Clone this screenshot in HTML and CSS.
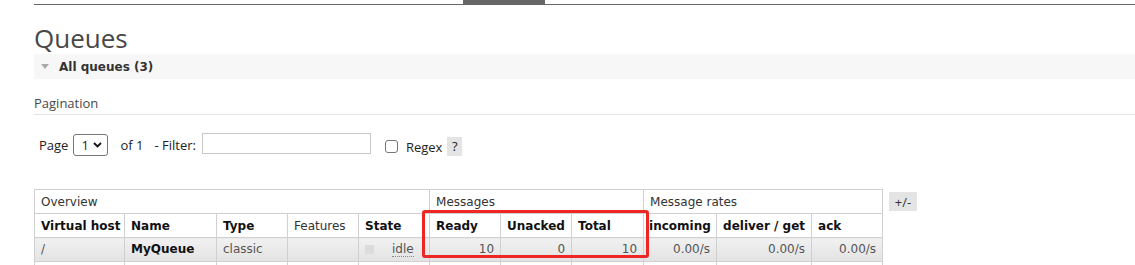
FILE: index.html
```html
<!DOCTYPE html>
<html lang="en">
<head>
    <meta charset="UTF-8">
    <meta name="viewport" content="width=device-width, initial-scale=1.0">
    <title>Queues</title>
    <link rel="stylesheet" href="styles.css">
</head>
<body>

<div class="nav"><span class="nav-tab"></span></div>

<div class="content">
    <h1>Queues</h1>

    <div class="section">
        <h2 class="section-title"><span class="toggle"></span>All queues (3)</h2>

        <h3 class="subtitle">Pagination</h3>

        <div class="pager">
            <span class="pager-label">Page</span>
            <span class="select-wrap">
                <select class="page-select">
                    <option>1</option>
                </select>
                <svg class="chevron" width="9" height="6" viewBox="0 0 9 6"><path d="M1 1 L4.5 4.5 L8 1" fill="none" stroke="#111" stroke-width="1.8"/></svg>
            </span>
            <span class="pager-of">of 1</span>
            <span class="pager-filter">- Filter:</span>
            <input type="text" class="filter-input">
            <input type="checkbox" class="regex-box" id="regex">
            <label class="regex-label" for="regex">Regex</label>
            <span class="help">?</span>
        </div>

        <div class="table-row">
            <div class="table-box">
                <table class="list">
                    <colgroup>
                        <col style="width: 90px">
                        <col style="width: 92px">
                        <col style="width: 71px">
                        <col style="width: 71px">
                        <col style="width: 71px">
                        <col style="width: 71px">
                        <col style="width: 71px">
                        <col style="width: 72px">
                        <col style="width: 73px">
                        <col style="width: 95px">
                        <col style="width: 71px">
                    </colgroup>
                    <thead>
                        <tr>
                            <th colspan="5" class="group">Overview</th>
                            <th colspan="3" class="group">Messages</th>
                            <th colspan="3" class="group">Message rates</th>
                        </tr>
                        <tr>
                            <th>Virtual host</th>
                            <th>Name</th>
                            <th>Type</th>
                            <th class="plain">Features</th>
                            <th>State</th>
                            <th>Ready</th>
                            <th>Unacked</th>
                            <th>Total</th>
                            <th class="tight">incoming</th>
                            <th>deliver / get</th>
                            <th>ack</th>
                        </tr>
                    </thead>
                    <tbody>
                        <tr class="alt1">
                            <td>/</td>
                            <td class="name">MyQueue</td>
                            <td>classic</td>
                            <td></td>
                            <td><span class="status"></span><abbr class="state">idle</abbr></td>
                            <td class="num">10</td>
                            <td class="num">0</td>
                            <td class="num">10</td>
                            <td class="num">0.00/s</td>
                            <td class="num">0.00/s</td>
                            <td class="num">0.00/s</td>
                        </tr>
                        <tr class="alt2">
                            <td></td><td></td><td></td><td></td><td></td><td></td>
                            <td></td><td></td><td></td><td></td><td></td>
                        </tr>
                    </tbody>
                </table>
                <!-- Rdeč okvir okoli stolpcev sporočil -->
                <div class="highlight"></div>
            </div>
            <button class="columns-toggle">+/-</button>
        </div>
    </div>
</div>

</body>
</html>
```

FILE: styles.css
```css
body {
    margin: 0;
    background-color: white;
    font-family: "Open Sans", Arial, sans-serif;
    color: #333333;
    overflow: hidden;
}

/* Zgornja vrstica z zavihki */
.nav {
    height: 4px;
    margin-left: 34px;
    border-bottom: 1px solid #666666;
}

.nav-tab {
    display: block;
    width: 82px;
    height: 4px;
    margin-left: 429px;
    background-color: #666666;
}

.content {
    margin-left: 34px;
}

h1 {
    margin: 18px 0 1px;
    font-size: 26px;
    line-height: 30px;
    font-weight: normal;
    color: #484848;
}

.section-title {
    display: flex;
    align-items: center;
    height: 25px;
    margin: 0;
    padding-left: 7px;
    background-color: #f7f7f7;
    font-family: "DejaVu Sans", Verdana, sans-serif;
    font-size: 12px;
    font-weight: bold;
    color: #333333;
}

.toggle {
    width: 0;
    height: 0;
    margin-right: 10px;
    border-left: 4px solid transparent;
    border-right: 4px solid transparent;
    border-top: 5px solid #aaaaaa;
}

.subtitle {
    margin: 16px 0 0;
    padding-bottom: 3px;
    font-size: 13px;
    line-height: 16px;
    font-weight: normal;
    color: #484848;
    border-bottom: 1px solid #e4e4e4;
}

/* Vrstica za strani in filter */
.pager {
    display: flex;
    align-items: center;
    height: 23px;
    margin-top: 18px;
    padding-left: 5px;
    font-size: 13px;
    color: #222222;
}

.select-wrap {
    position: relative;
    margin-left: 5px;
}

.page-select {
    appearance: none;
    display: block;
    width: 35px;
    height: 22px;
    padding: 0 0 0 7px;
    border: 1px solid #767676;
    border-radius: 3px;
    background: white;
    font-family: "Open Sans", Arial, sans-serif;
    font-size: 13px;
    color: #222222;
}

.chevron {
    position: absolute;
    top: 8px;
    right: 6px;
}

.pager-of {
    margin-left: 12px;
}

.pager-filter {
    margin-left: 11px;
}

.filter-input {
    width: 169px;
    height: 21px;
    margin: 0 0 2px 6px;
    padding: 0 4px;
    box-sizing: border-box;
    border: 1px solid #c8c8c8;
}

.regex-box {
    appearance: none;
    width: 13px;
    height: 13px;
    margin: 3px 0 0 14px;
    border: 1px solid #767676;
    border-radius: 3px;
    background: white;
}

.regex-label {
    margin: 5px 0 0 8px;
}

.help {
    width: 15px;
    height: 19px;
    margin: 3px 0 0 5px;
    background-color: #e4e4e4;
    text-align: center;
    line-height: 19px;
    font-size: 13px;
}

/* Tabela vrst */
.table-row {
    display: flex;
    align-items: flex-start;
    margin-top: 33px;
}

.table-box {
    position: relative;
}

table.list {
    table-layout: fixed;
    width: 848px;
    border-collapse: collapse;
    font-family: "DejaVu Sans", Verdana, sans-serif;
    font-size: 12px;
    line-height: 15px;
}

.list th, .list td {
    height: 15px;
    padding: 5px 6px 3px;
    border: 1px solid #d0d0d0;
    text-align: left;
    white-space: nowrap;
    overflow: hidden;
}

.list th {
    background-color: white;
    color: #111111;
    font-weight: bold;
}

.list th.group, .list th.plain {
    font-weight: normal;
    color: #333333;
}

.list th.tight {
    padding-left: 5px;
}

.list td {
    padding: 4px 6px;
    color: #555555;
}

.list tr.alt1 td {
    background: linear-gradient(#f1f1f1, #e3e3e3);
}

.list td.name {
    font-weight: bold;
    color: #111111;
}

.list td.num {
    text-align: right;
}

.status {
    display: inline-block;
    width: 9px;
    height: 9px;
    margin-right: 18px;
    background-color: #dcdcdc;
    vertical-align: -1px;
}

.state {
    text-decoration: none;
    border-bottom: 1px dotted #888888;
}

.highlight {
    position: absolute;
    left: 388px;
    top: 21px;
    width: 221px;
    height: 42px;
    border: 3px solid #ee2624;
    border-radius: 3px;
}

.columns-toggle {
    width: 28px;
    height: 19px;
    margin: 3px 0 0 6px;
    padding: 0;
    border: none;
    background-color: #e4e4e4;
    font-family: "Open Sans", Arial, sans-serif;
    font-size: 13px;
    color: #333333;
}
```
